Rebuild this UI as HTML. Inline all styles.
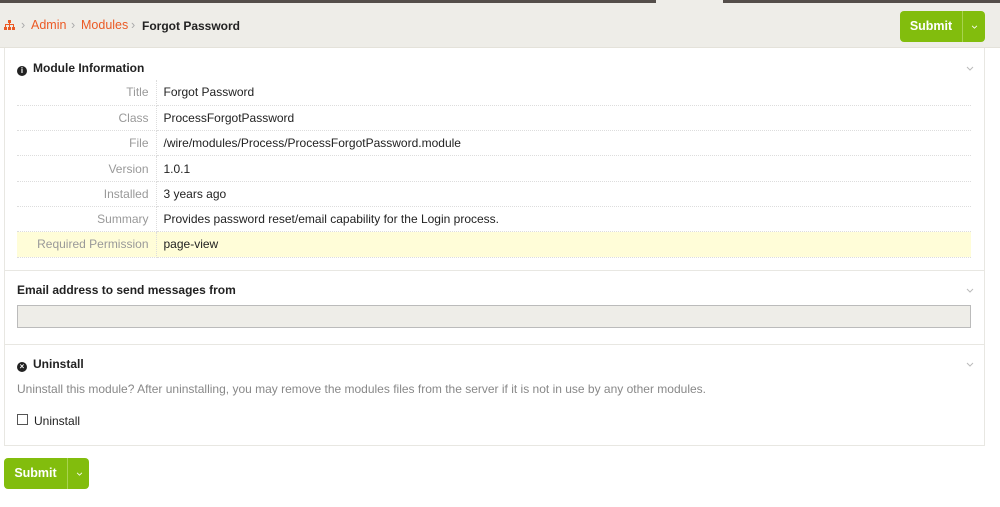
<!DOCTYPE html>
<html><head><style>
*{box-sizing:border-box;margin:0;padding:0}
body{width:1000px;height:507px;background:#fff;font-family:"Liberation Sans",Arial,sans-serif;font-size:12px;color:#222;position:relative;overflow:hidden}
.top{position:absolute;left:0;top:0;width:1000px;height:48px;background:#eeede8;border-bottom:1px solid #e4e2da}
.bar{position:absolute;top:0;height:3px;background:#544e4a}
.crumb{position:absolute;top:18px;font-size:12.5px;color:#aaa;white-space:nowrap}
.crumb.a{color:#eb5a25}
.crumb.b{color:#222;font-weight:bold;font-size:12px;top:19px}
.btn{position:absolute;background:#82bd0d;border-radius:4px;color:#fff;font-weight:bold;font-size:12.5px}
.btn .l{position:absolute;left:0;top:0;bottom:0;text-align:center}
.btn .d{position:absolute;top:0;bottom:0;right:0;border-left:1px solid #a8d34f}
.box{position:absolute;left:4px;width:981px;border:1px solid #e8e7e2;border-top:none}
.sec{position:absolute;left:4px;width:981px;border-top:1px solid #e8e7e2}
h3{position:absolute;left:17px;font-size:12px;font-weight:bold;color:#222}
.chev{position:absolute;left:966px}
table{position:absolute;left:17px;top:80px;width:954px;border-collapse:collapse}
td{height:25.3px;border-bottom:1px dotted #ddd;font-size:12px;padding:0 7px}
td.k{width:139px;text-align:right;color:#999;border-right:1px dotted #ddd}
tr.y td{background:#fffdd8}
.ico{display:inline-block;width:10px;height:10px;border-radius:50%;background:#222;color:#fff;font-size:8px;text-align:center;line-height:10px;vertical-align:-1px;margin-right:6px;font-weight:bold}
</style></head><body>
<div class="top"></div>
<div class="bar" style="left:0;width:656px"></div>
<div class="bar" style="left:723px;width:277px"></div>
<svg style="position:absolute;left:4px;top:20px" width="11" height="10" viewBox="0 0 11 10"><g fill="#eb5a25"><rect x="4" y="0" width="3" height="3"/><rect x="5" y="3" width="1" height="2"/><rect x="1" y="4" width="9" height="1"/><rect x="1" y="4" width="1" height="3"/><rect x="9" y="4" width="1" height="3"/><rect x="0" y="7" width="3" height="3"/><rect x="4" y="7" width="3" height="3"/><rect x="8" y="7" width="3" height="3"/><rect x="5" y="5" width="1" height="2"/></g></svg>
<span class="crumb" style="left:21px">›</span>
<span class="crumb a" style="left:31px">Admin</span>
<span class="crumb" style="left:71px">›</span>
<span class="crumb a" style="left:81px">Modules</span>
<span class="crumb" style="left:131px">›</span>
<span class="crumb b" style="left:142px">Forgot Password</span>
<svg width="0" height="0" style="position:absolute"><defs><symbol id="cv" viewBox="0 0 8 5"><path d="M1 1 L4 4 L7 1" fill="none" stroke-width="1"/></symbol></defs></svg>
<div class="btn" style="left:900px;top:11px;width:85px;height:31px"><span class="l" style="width:62px;line-height:31px">Submit</span><span class="d" style="width:23px"><svg style="position:absolute;left:8px;top:14px" width="7" height="4" viewBox="0 0 8 5" stroke="#fff"><use href="#cv"/></svg></span></div>

<div class="box" style="top:48px;height:398px"></div>
<h3 style="top:61px"><span class="ico">i</span>Module Information</h3>
<svg class="chev" style="top:66px" width="8" height="5" stroke="#bbb"><use href="#cv"/></svg>
<table>
<tr><td class="k">Title</td><td>Forgot Password</td></tr>
<tr><td class="k">Class</td><td>ProcessForgotPassword</td></tr>
<tr><td class="k">File</td><td>/wire/modules/Process/ProcessForgotPassword.module</td></tr>
<tr><td class="k">Version</td><td>1.0.1</td></tr>
<tr><td class="k">Installed</td><td>3 years ago</td></tr>
<tr><td class="k">Summary</td><td>Provides password reset/email capability for the Login process.</td></tr>
<tr class="y"><td class="k">Required Permission</td><td>page-view</td></tr>
</table>
<div class="sec" style="top:270px"></div>
<h3 style="top:283px">Email address to send messages from</h3>
<svg class="chev" style="top:288px" width="8" height="5" stroke="#bbb"><use href="#cv"/></svg>
<div style="position:absolute;left:17px;top:305px;width:954px;height:23px;border:1px solid #bbb;background:#eeede8"></div>
<div class="sec" style="top:344px"></div>
<h3 style="top:357px"><span class="ico">×</span>Uninstall</h3>
<svg class="chev" style="top:362px" width="8" height="5" stroke="#bbb"><use href="#cv"/></svg>
<div style="position:absolute;left:17px;top:382px;color:#888">Uninstall this module? After uninstalling, you may remove the modules files from the server if it is not in use by any other modules.</div>
<div style="position:absolute;left:17px;top:414px;width:11px;height:11px;border:1px solid #555"></div>
<div style="position:absolute;left:34px;top:414px">Uninstall</div>
<div class="btn" style="left:4px;top:458px;width:85px;height:31px"><span class="l" style="width:63px;line-height:31px">Submit</span><span class="d" style="width:22px"><svg style="position:absolute;left:8px;top:14px" width="7" height="4" viewBox="0 0 8 5" stroke="#fff"><use href="#cv"/></svg></span></div>
</body></html>
